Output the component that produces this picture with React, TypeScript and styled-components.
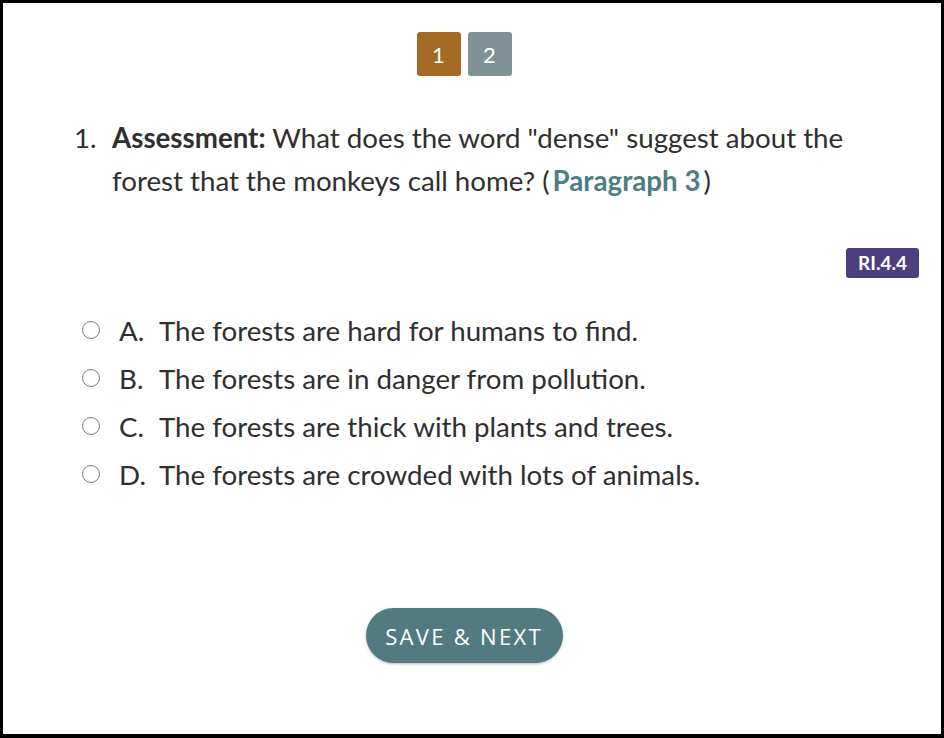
import React, { useState } from "react";
import styled, { createGlobalStyle } from "styled-components";

const GlobalStyle = createGlobalStyle`
  html, body {
    margin: 0;
    padding: 0;
    background: #ffffff;
  }
  body {
    font-family: Lato, "Open Sans", Arial, sans-serif;
    color: #333333;
  }
`;

interface Choice {
    letter: string;
    text: string;
}

const choices: Choice[] = [
    { letter: "A.", text: "The forests are hard for humans to find." },
    { letter: "B.", text: "The forests are in danger from pollution." },
    { letter: "C.", text: "The forests are thick with plants and trees." },
    { letter: "D.", text: "The forests are crowded with lots of animals." },
];

const Frame = styled.div`
  box-sizing: border-box;
  width: 944px;
  height: 738px;
  border-top: 3px solid #000;
  border-left: 3px solid #000;
  border-right: 3px solid #000;
  border-bottom: 4px solid #000;
  display: flex;
  flex-direction: column;
  padding: 29px 24px 0 71px;
`;

const Pager = styled.div`
  display: flex;
  justify-content: center;
  gap: 7px;
  margin-left: -63px;
`;

const PageButton = styled.button<{ $active?: boolean }>`
  width: 44px;
  height: 44px;
  border: none;
  border-radius: 3px;
  background: ${(p) => (p.$active ? "#a36a25" : "#7f9397")};
  color: #ffffff;
  font-family: Lato, sans-serif;
  font-size: 22px;
  padding: 0;
  cursor: pointer;
`;

const Question = styled.div`
  display: flex;
  margin-top: 40px;
  font-size: 27.7px;
  line-height: 43px;
  color: #2f2f2f;
`;

const QNumber = styled.span`
  width: 38px;
  flex-shrink: 0;
`;

const QText = styled.p`
  margin: 0;
  max-width: 780px;

  strong {
    font-weight: 700;
  }
`;

const RefLink = styled.a`
  color: #4f7d84;
  font-weight: 700;
  text-decoration: none;
  margin: 0 3px;
`;

const BadgeRow = styled.div`
  display: flex;
  justify-content: flex-end;
  margin-top: 46px;
`;

const Badge = styled.span`
  display: inline-block;
  height: 30px;
  background: #4d3f7e;
  color: #ffffff;
  font-weight: 700;
  font-size: 19px;
  line-height: 30px;
  padding: 0 12px;
  border-radius: 3px;
  margin-right: -2px;
`;

const ChoiceList = styled.ul`
  list-style: none;
  margin: 28px 0 0;
  padding: 0 0 0 8px;
  display: flex;
  flex-direction: column;
`;

const ChoiceRow = styled.li`
  display: flex;
  align-items: center;
  height: 48px;
  font-size: 27.7px;
  color: #2f2f2f;
  cursor: pointer;
`;

const Radio = styled.span<{ $checked?: boolean }>`
  box-sizing: border-box;
  width: 18px;
  height: 18px;
  border: 1.5px solid #7a7a7a;
  border-radius: 50%;
  margin-right: 19px;
  flex-shrink: 0;
  background: ${(p) => (p.$checked ? "radial-gradient(#527a80 40%, #fff 45%)" : "#fff")};
`;

const Letter = styled.span`
  width: 40px;
  flex-shrink: 0;
`;

const Footer = styled.div`
  display: flex;
  justify-content: center;
  margin-top: 110px;
  margin-left: -63px;
`;

const SaveButton = styled.button`
  width: 197px;
  height: 55px;
  border: none;
  border-radius: 28px;
  background: #527a80;
  color: #ffffff;
  font-family: "Open Sans", Lato, sans-serif;
  font-size: 22px;
  letter-spacing: 2.3px;
  padding: 0;
  box-shadow: 0 1px 3px rgba(0, 0, 0, 0.25);
  cursor: pointer;
`;

export default function App() {
    const [page, setPage] = useState(1);
    const [picked, setPicked] = useState<number | null>(null);

    return (
        <>
            <GlobalStyle />
            <Frame>
                <Pager>
                    {[1, 2].map((n) => (
                        <PageButton key={n} $active={page === n} onClick={() => setPage(n)}>
                            {n}
                        </PageButton>
                    ))}
                </Pager>
                <Question>
                    <QNumber>1.</QNumber>
                    <QText>
                        <strong>Assessment:</strong> What does the word "dense" suggest about the
                        forest that the monkeys call home? (<RefLink href="#">Paragraph 3</RefLink>)
                    </QText>
                </Question>
                <BadgeRow>
                    <Badge>RI.4.4</Badge>
                </BadgeRow>
                <ChoiceList>
                    {choices.map((c, i) => (
                        <ChoiceRow key={c.letter} onClick={() => setPicked(i)}>
                            <Radio $checked={picked === i} />
                            <Letter>{c.letter}</Letter>
                            <span>{c.text}</span>
                        </ChoiceRow>
                    ))}
                </ChoiceList>
                <Footer>
                    <SaveButton>SAVE &amp; NEXT</SaveButton>
                </Footer>
            </Frame>
        </>
    );
}
